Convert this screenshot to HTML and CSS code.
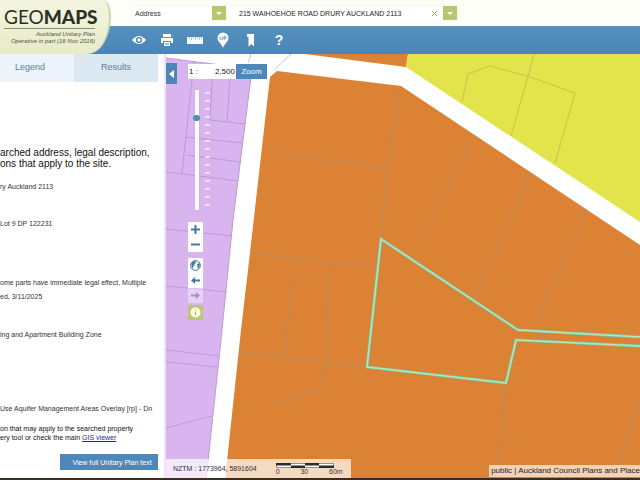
FILE: index.html
```html
<!DOCTYPE html>
<html lang="en">
<head>
    <meta charset="UTF-8">
    <meta name="viewport" content="width=device-width, initial-scale=1.0">
    <title>GeoMaps - Auckland Unitary Plan</title>
    <link rel="stylesheet" href="styles.css">
</head>
<body>

<header class="header">
    <div class="brand">
        <h1>GEO<b>MAPS</b></h1>
        <p>Auckland Unitary Plan<br>Operative in part (16 Nov 2016)</p>
    </div>
    <div class="bars">
        <form class="search">
            <div class="type-box">
                <select aria-label="Search type">
                    <option>Address</option>
                </select>
                <span class="arrow"></span>
            </div>
            <div class="address-box">
                <input type="text" aria-label="Address" value="215 WAIHOEHOE ROAD DRURY AUCKLAND 2113">
                <button type="button" class="clear" aria-label="Clear">
                    <svg width="7" height="7" viewBox="0 0 7 7"><path d="M1 1l5 5M6 1l-5 5" stroke="#999d86" stroke-width="1"/></svg>
                </button>
                <button type="button" class="arrow" aria-label="Show results"></button>
            </div>
        </form>
        <nav class="toolbar">
            <button type="button" aria-label="Visibility">
                <svg width="14" height="14" viewBox="0 0 14 14"><path d="M0 7Q7 -1 14 7Q7 15 0 7Z" fill="#fff"/><circle cx="7" cy="7" r="3.1" fill="#4d88b9"/><circle cx="7" cy="7" r="1.7" fill="#fff"/></svg>
            </button>
            <button type="button" aria-label="Print">
                <svg width="14" height="14" viewBox="0 0 14 14"><path d="M3 1h8v3H3zM1 5h12v5h-2V8H3v2H1zM4 9h6v4H4z" fill="#fff"/><path d="M5 11h4" stroke="#4d88b9"/></svg>
            </button>
            <button type="button" aria-label="Measure">
                <svg width="16" height="14" viewBox="0 0 16 14"><rect x="0" y="4" width="16" height="7" fill="#fff"/><path d="M2.500 4v2M4.500 4v3M6.500 4v2M8.500 4v3M10.500 4v2M12.500 4v3M14.500 4v2" stroke="#8db4d4" stroke-width=".7"/></svg>
            </button>
            <button type="button" aria-label="Unitary plan pin">
                <svg width="14" height="16" viewBox="0 0 14 16"><path d="M7 16C6 12 1.500 10 1.500 6a5.500 5.500 0 0 1 11 0C12.500 10 8 12 7 16Z" fill="#fff"/><path d="M4 4.500v2q0 1 1.200 1t1.200-1v-2M8 8V4.500h1q1.200 0 1.200 1t-1.200 1H8" fill="none" stroke="#4d88b9" stroke-width=".8"/></svg>
            </button>
            <button type="button" aria-label="Bookmark">
                <svg width="10" height="14" viewBox="0 0 10 14"><path d="M1 1h7v12.500L5.500 11 2.500 13.500V4H1z" fill="#fff"/></svg>
            </button>
            <button type="button" class="help" aria-label="Help">?</button>
        </nav>
    </div>
</header>

<main class="main">
    <aside class="panel">
        <div class="tabs">
            <button type="button">Legend</button>
            <button type="button" class="active">Results</button>
        </div>
        <div class="report">
            <h2>arched address, legal description,<br>ons that apply to the site.</h2>
            <p class="address">ry Auckland 2113</p>
            <p class="legal">Lot 9 DP 122231</p>
            <p class="changes">ome parts have immediate legal effect, Multiple<br>ed, 3/11/2025</p>
            <p class="zone">ing and Apartment Building Zone</p>
            <p class="overlay">Use Aquifer Management Areas Overlay [rp] - Dn</p>
            <p class="note">on that may apply to the searched property<br>ery tool or check the main <a href="#">GIS viewer</a></p>
            <button type="button" class="full-text">View full Unitary Plan text</button>
        </div>
    </aside>

    <section class="map">
        <svg class="parcels" viewBox="166 54 474 424" preserveAspectRatio="xMinYMin slice">
            <rect x="166" y="54" width="474" height="424" fill="#fff"/>
            <!-- zones -->
            <path d="M166 58L252 69 233 220 221 340 206 480H166Z" fill="#d8b5ef"/>
            <path d="M270 77L277 71 401 86 640 245V480H225L241 330 248 270Z" fill="#dc8235"/>
            <path d="M305 54H408L406 67Z" fill="#dc8235"/>
            <path d="M408 54H640V222L406 67Z" fill="#e3e44c"/>
            <!-- parcel boundaries -->
            <g fill="none" stroke="#bd9ad6" stroke-width="1">
                <path d="M166 58L252 69 233 220 221 340 206 480"/>
                <path d="M194 62L182 173M213 64L210 120L246 124M231 67L227 121M185 137L242 143M187 155L241 162M166 172L238 181M166 229L232 236M166 286L227 292M166 350L219 356M166 362L217 367M166 428L212 416"/>
            </g>
            <path d="M251 54L248 63M291 54L275 69" stroke="#c9c4cf"/>
            <g fill="none" stroke="#b98b5c" stroke-width="1">
                <path d="M400 87L387 167 381 239M271 153L387 167M250 253L376 268M295 258L285 356M329 262L325 367 320 388 277 404M241 352L367 367"/>
                <path d="M475 135L415 248M530 172L475 298M586 209L533 330M506 383L497 478M640 400L617 478"/>
            </g>
            <g fill="none" stroke="#c3c249" stroke-width="1">
                <path d="M462 102L468 74 490 66 527 76 575 93 555 163M534 54L527 80 511 136"/>
            </g>
            <!-- selected property -->
            <path d="M642 337L518 330 381 239 367 367 506 383 516 340 642 346" fill="none" stroke="#7ac4a0" stroke-width="3"/>
            <path d="M642 337L518 330 381 239 367 367 506 383 516 340 642 346" fill="none" stroke="#b5e8b9" stroke-width="1.500"/>
        </svg>

        <button type="button" class="collapse" aria-label="Hide panel">
            <svg width="5" height="8" viewBox="0 0 5 8"><path d="M5 0v8L0 4z" fill="#fff"/></svg>
        </button>

        <div class="controls">
            <form class="scale">
                <label for="scale">1 :</label>
                <input type="text" id="scale" value="2,500">
                <button type="button">Zoom</button>
            </form>
            <div class="slider">
                <input type="range" min="0" max="100" value="22" aria-label="Zoom level">
                <span class="ticks"></span>
            </div>
            <div class="buttons">
                <button type="button" aria-label="Zoom in"><svg width="9" height="9" viewBox="0 0 9 9"><path d="M4.500 0v9M0 4.500h9" stroke="#45789f" stroke-width="2"/></svg></button>
                <button type="button" aria-label="Zoom out"><svg width="9" height="9" viewBox="0 0 9 9"><path d="M0 4.500h9" stroke="#45789f" stroke-width="2"/></svg></button>
            </div>
            <div class="buttons">
                <button type="button" aria-label="Full extent"><svg width="11" height="11" viewBox="0 0 11 11"><circle cx="5.500" cy="5.500" r="4.900" fill="#fff" stroke="#45789f"/><path d="M1.500 3Q3 .8 5.500 1L6 3 4 4 4.500 5.500 3 6.500 3.500 9Q1 7.500 1.500 3ZM7 4L9.500 3Q10.500 6 8.500 8.500L7.500 8 7.500 6Z" fill="#45789f"/></svg></button>
                <button type="button" aria-label="Previous view"><svg width="9" height="7" viewBox="0 0 9 7"><path d="M0 3.500L4 0v2.500h5v2H4V7z" fill="#45789f"/></svg></button>
                <button type="button" aria-label="Next view" disabled><svg width="9" height="7" viewBox="0 0 9 7"><path d="M9 3.500L5 0v2.500H0v2h5V7z" fill="#9a94c8"/></svg></button>
            </div>
            <button type="button" class="info" aria-label="Information"><svg width="11" height="11" viewBox="0 0 11 11"><circle cx="5.500" cy="5.500" r="5" fill="#fffff0"/><path d="M5.500 2.200v1.300M5.500 4.500v4" stroke="#b3bd5b" stroke-width="1.300"/></svg></button>
        </div>

        <div class="readout">
            <span>NZTM : 1773964, 5891604</span>
            <div class="scale-bar">
                <svg width="58" height="5" viewBox="0 0 58 5"><rect x=".5" y=".5" width="57" height="4" fill="#fff" stroke="#555" stroke-width=".6"/><path d="M0 0h15v2.500H0zM15 2.500h14V5H15zM29 0h14v2.500H29zM43 2.500h15V5H43z" fill="#2b2b2b"/></svg>
                <div class="distances"><span>0</span><span>30</span><span>60m</span></div>
            </div>
        </div>
        <div class="credit">public | Auckland Council Plans and Place</div>
    </section>
</main>

</body>
</html>
```

FILE: styles.css
```css
* {
    box-sizing: border-box;
}
body {
    margin: 0;
    height: 100vh;
    display: flex;
    flex-direction: column;
    overflow: hidden;
    font-family: "Liberation Sans", Arial, sans-serif;
    font-size: 7px;
    color: #333;
    background-color: #fff;
    border-bottom: 2px solid #3f2a1c;
}
h1, h2, p {
    margin: 0;
}
button, input, select {
    font-family: inherit;
    font-size: inherit;
    color: inherit;
    margin: 0;
    padding: 0;
    border: none;
    border-radius: 0;
    background: none;
}
button {
    display: flex;
    align-items: center;
    justify-content: center;
    cursor: pointer;
}
svg {
    display: block;
}

/* Header */
.header {
    display: flex;
    height: 54px;
    flex-shrink: 0;
    background: linear-gradient(#fefef9 26px, #5490c0 26px, #4b85b7);
}
.brand {
    width: 111px;
    padding: 6px 14px 0 4px;
    background: linear-gradient(#f4f5df, #e7ebc6);
    border-right: 2px solid #cdd5ad;
    border-radius: 0 12px 36px 0 / 0 24px 60px 0;
}
.brand h1 {
    font-family: Lato, sans-serif;
    font-size: 19px;
    line-height: 22px;
    font-weight: 400;
    color: #2d2f2b;
    border-bottom: 1px solid #8c8f80;
}
.brand h1 b {
    font-weight: 900;
}
.brand p {
    padding-top: 2px;
    margin-left: -8px;
    font-size: 6px;
    line-height: 7px;
    font-style: italic;
    text-align: right;
    white-space: nowrap;
    color: #4f5248;
}
.bars {
    flex: 1;
}
.search {
    display: flex;
    gap: 5px;
    height: 26px;
    padding: 6px 0 6px 21px;
}
.type-box, .address-box {
    display: flex;
    align-items: center;
    height: 14px;
    background-color: #fff;
    box-shadow: 0 0 1px #d5d8b8;
}
.type-box {
    position: relative;
    width: 94px;
}
.type-box select {
    appearance: none;
    width: 100%;
    height: 14px;
    padding-left: 3px;
}
.arrow {
    width: 14px;
    height: 14px;
    flex-shrink: 0;
    background-color: #b9c66d;
}
.arrow::after {
    content: "";
    border: 3px solid transparent;
    border-top-color: #fff;
    border-bottom: none;
}
.type-box .arrow {
    position: absolute;
    right: 0;
    display: flex;
    align-items: center;
    justify-content: center;
    pointer-events: none;
}
.address-box {
    width: 226px;
}
.address-box input {
    flex: 1;
    min-width: 0;
    padding-left: 8px;
    color: #222;
}
.clear {
    width: 17px;
}
.toolbar {
    display: flex;
    align-items: center;
    height: 28px;
    padding-left: 14px;
}
.toolbar button {
    width: 28px;
    height: 28px;
}
.toolbar .help {
    font-size: 14px;
    font-weight: bold;
    color: #fff;
}

/* Results panel */
.main {
    flex: 1;
    display: flex;
    min-height: 0;
}
.panel {
    width: 166px;
    flex-shrink: 0;
    padding-right: 6px;
    border-right: 2px solid #eee4f8;
}
.tabs {
    display: flex;
    height: 28px;
}
.tabs button {
    flex: 1;
    padding: 0 0 2px;
    font-size: 9px;
    color: #607f9c;
    background-color: #edf4fb;
}
.tabs button:first-child {
    padding-right: 14px;
    flex-basis: 74px;
    flex-grow: 0;
}
.tabs .active {
    background-color: #dce8f2;
}
.report {
    padding-top: 65px;
    line-height: 14px;
    white-space: nowrap;
}
.report h2 {
    font-size: 10px;
    font-weight: normal;
    line-height: 11px;
    color: #111;
}
.address {
    padding-top: 11px;
}
.legal {
    padding-top: 23px;
}
.changes {
    padding-top: 45px;
}
.zone {
    padding-top: 24px;
}
.overlay {
    padding-top: 60px;
}
.note {
    padding: 8px 0 12px;
    line-height: 9px;
    color: #111;
}
.note a {
    color: #2a1fb0;
}
.full-text {
    width: 98px;
    height: 16px;
    margin-left: auto;
    padding-left: 6px;
    color: #fff;
    background-color: #4d88b9;
}

/* Map */
.map {
    position: relative;
    flex: 1;
    min-width: 0;
    overflow: hidden;
}
.parcels {
    width: 100%;
    height: 100%;
}
.collapse {
    position: absolute;
    top: 9px;
    left: 0;
    width: 11px;
    height: 21px;
    background-color: #4d88b9;
}
.controls {
    position: absolute;
    top: 10px;
    left: 22px;
    display: flex;
    flex-direction: column;
}
.scale {
    display: flex;
    align-items: center;
    height: 15px;
    font-size: 8px;
    color: #222;
    background-color: #fff;
}
.scale label {
    padding-left: 1px;
}
.scale input {
    width: 37px;
    text-align: right;
}
.scale button {
    width: 31px;
    height: 15px;
    margin-left: 1px;
    color: #fff;
    background-color: #4d88b9;
}
.slider {
    display: flex;
    gap: 5px;
    padding: 11px 0 12px 6px;
}
.slider input {
    appearance: none;
    writing-mode: vertical-lr;
    width: 6px;
    height: 120px;
}
.slider input::-webkit-slider-runnable-track {
    width: 4px;
    background-color: #fff;
    box-shadow: 0 0 1px #b08fc8;
}
.slider input::-webkit-slider-thumb {
    appearance: none;
    width: 7px;
    height: 6px;
    margin-left: -2px;
    border-radius: 3px;
    background-color: #4e90ab;
}
.ticks {
    width: 5px;
    background: repeating-linear-gradient(transparent 0 2px, #efe0f9 2px 4px, transparent 4px 8px);
}
.buttons {
    width: 15px;
    margin-bottom: 6px;
    background-color: rgba(255, 255, 255, 0.4);
}
.buttons button {
    width: 15px;
    height: 15px;
    background-color: #fff;
}
.buttons button:disabled {
    background: none;
}
.info {
    width: 15px;
    height: 15px;
    margin-top: -4px;
    background-color: #bfc672;
}
.readout {
    position: absolute;
    left: 0;
    bottom: 0;
    display: flex;
    gap: 19px;
    align-items: center;
    width: 185px;
    height: 19px;
    padding-left: 7px;
    white-space: nowrap;
    background-color: rgba(255, 255, 255, 0.7);
}
.scale-bar {
    width: 67px;
    padding-top: 1px;
}
.distances {
    display: flex;
    justify-content: space-between;
    line-height: 7px;
}
.credit {
    position: absolute;
    right: 0;
    bottom: 1px;
    padding-left: 2px;
    line-height: 12px;
    font-size: 8px;
    white-space: nowrap;
    color: #222;
    background-color: rgba(255, 255, 255, 0.65);
}
```
